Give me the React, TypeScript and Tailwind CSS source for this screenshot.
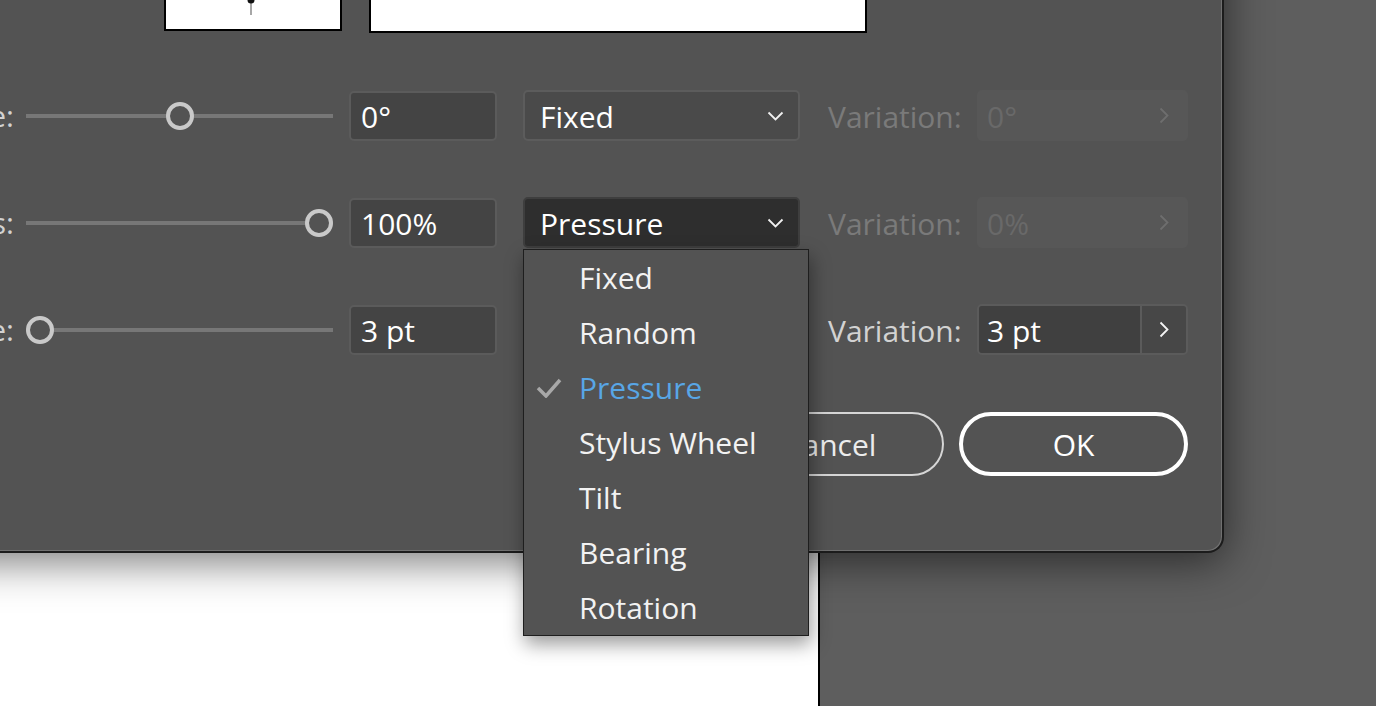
import type { ReactNode } from "react";

const OPTIONS = ["Fixed", "Random", "Pressure", "Stylus Wheel", "Tilt", "Bearing", "Rotation"];

export default function App() {
  return (
    <div className="relative flex h-[706px] w-[1376px] overflow-hidden bg-[#5e5e5e] font-medium [font-family:'Open_Sans',sans-serif]">
      {/* artboard behind the dialog */}
      <div className="h-full w-[820px] border-r-2 border-black bg-white" />

      {/* Calligraphic Brush Options dialog, partly off screen */}
      <div className="absolute left-[-220px] top-[-120px] flex h-[673px] w-[1444px] flex-col rounded-br-[16px] border-b-2 border-r-2 border-[#1c1c1c] bg-[#535353] pt-[20px] shadow-[inset_-1px_-1px_0_#707070,0_8px_44px_rgba(0,0,0,0.55)]">
        <div className="flex items-start pl-[384px]">
          <div className="flex h-[131px] w-[178px] flex-col items-start justify-end border-2 border-black bg-white pb-[14px] pl-[81px]">
            <svg width="8" height="19" viewBox="0 0 8 19">
              <line x1="4" y1="4" x2="4" y2="19" stroke="#8a8a8a" strokeWidth="1.5" />
              <circle cx="4" cy="4" r="3.5" fill="#111" />
            </svg>
          </div>
          <div className="ml-[27px] h-[133px] w-[498px] border-2 border-black bg-white" />
        </div>

        <div className="mt-[57px] flex flex-col gap-[56px]">
          <Row label="Angle:" fraction={0.5}>
            <NumberBox value="0°" />
            <Dropdown value="Fixed" />
            <Variation value="0°" disabled />
          </Row>
          <Row label="Roundness:" fraction={1}>
            <NumberBox value="100%" />
            <Dropdown value="Pressure" open />
            <Variation value="0%" disabled />
          </Row>
          <Row label="Size:" fraction={0}>
            <NumberBox value="3 pt" />
            <Dropdown value="Fixed" />
            <Variation value="3 pt" />
          </Row>
        </div>

        <div className="mt-[57px] flex justify-end gap-[15px] pr-[34px]">
          <button className="flex h-[64px] w-[228px] items-center justify-center rounded-full border-2 border-[#d6d6d6] text-[30px] text-[#ececec]">
            Cancel
          </button>
          <button className="flex h-[64px] w-[229px] items-center justify-center rounded-full border-4 border-white text-[30px] text-white">
            OK
          </button>
        </div>
      </div>

      {/* open popup menu of the Roundness dropdown */}
      <div className="absolute left-[523px] top-[249px] flex w-[286px] flex-col border border-[#1e1e1e] bg-[#535353] shadow-[2px_8px_18px_rgba(0,0,0,0.4)]">
        {OPTIONS.map((option) => (
          <div key={option} className="flex h-[55px] items-center pl-[12px]">
            <div className="flex w-[43px] items-center">
              {option === "Pressure" && (
                <svg width="26" height="21" viewBox="0 0 26 21">
                  <path d="M2 11 L10 19 L24 3" fill="none" stroke="#a8a8a8" strokeWidth="3.5" />
                </svg>
              )}
            </div>
            <span className={option === "Pressure" ? "text-[30px] text-[#58a6e6]" : "text-[30px] text-[#f2f2f2]"}>
              {option}
            </span>
          </div>
        ))}
      </div>
    </div>
  );
}

function Row({ label, fraction, children }: { readonly label: string; readonly fraction: number; readonly children: ReactNode }) {
  return (
    <div className="flex h-[51px] items-center">
      <span className="w-[234px] whitespace-nowrap text-right text-[30px] text-[#d2d2d2]">{label}</span>
      <div className="relative ml-[12px] flex h-[28px] w-[307px] items-center">
        <div className="h-[4px] w-full bg-[#777777]" />
        <div
          className="absolute top-0 size-[28px] rounded-full border-4 border-[#c9c9c9] bg-[#535353]"
          style={{ left: `${fraction * 279}px` }}
        />
      </div>
      {children}
    </div>
  );
}

function NumberBox({ value }: { readonly value: string }) {
  return (
    <div className="ml-[16px] flex h-[50px] w-[148px] items-center rounded-[5px] border-2 border-[#5b5b5b] bg-[#444444] pl-[10px] pt-[2px] text-[30px] text-white">
      {value}
    </div>
  );
}

function Dropdown({ value, open = false }: { readonly value: string; readonly open?: boolean }) {
  return (
    <div
      className={
        open
          ? "ml-[26px] flex h-[51px] w-[277px] items-center justify-between rounded-[5px] border-2 border-[#3e3e3e] bg-[#2e2e2e] pl-[15px] pr-[14px] text-[30px] text-white"
          : "ml-[26px] flex h-[51px] w-[277px] items-center justify-between rounded-[5px] border-2 border-[#5c5c5c] bg-[#4a4a4a] pl-[15px] pr-[14px] text-[30px] text-white"
      }
    >
      <span className="pt-[2px]">{value}</span>
      <svg width="17" height="10" viewBox="0 0 17 10">
        <polyline points="1.5,1.5 8.5,8.5 15.5,1.5" fill="none" stroke="#f0f0f0" strokeWidth="1.8" />
      </svg>
    </div>
  );
}

function Variation({ value, disabled = false }: { readonly value: string; readonly disabled?: boolean }) {
  if (disabled) {
    return (
      <>
        <span className="ml-[28px] w-[149px] pt-[2px] text-[30px] text-[#7a7a7a]">Variation:</span>
        <div className="flex h-[51px] w-[211px] items-center justify-between rounded-[5px] bg-[#575757] pl-[10px] pr-[19px] text-[30px] text-[#696969]">
          <span className="pt-[2px]">{value}</span>
          <Chevron color="#6e6e6e" />
        </div>
      </>
    );
  }
  return (
    <>
      <span className="ml-[28px] w-[149px] pt-[2px] text-[30px] text-[#d2d2d2]">Variation:</span>
      <div className="flex h-[51px] w-[211px] overflow-hidden rounded-[5px] border-2 border-[#5b5b5b] text-[30px] text-white">
        <div className="flex flex-1 items-center border-r-2 border-[#5b5b5b] bg-[#404040] pl-[8px] pt-[2px]">{value}</div>
        <div className="flex w-[44px] items-center justify-center bg-[#474747]">
          <Chevron color="#f4f4f4" />
        </div>
      </div>
    </>
  );
}

function Chevron({ color }: { readonly color: string }) {
  return (
    <svg width="10" height="17" viewBox="0 0 10 17">
      <polyline points="1.5,1.5 8.5,8.5 1.5,15.5" fill="none" stroke={color} strokeWidth="1.8" />
    </svg>
  );
}
